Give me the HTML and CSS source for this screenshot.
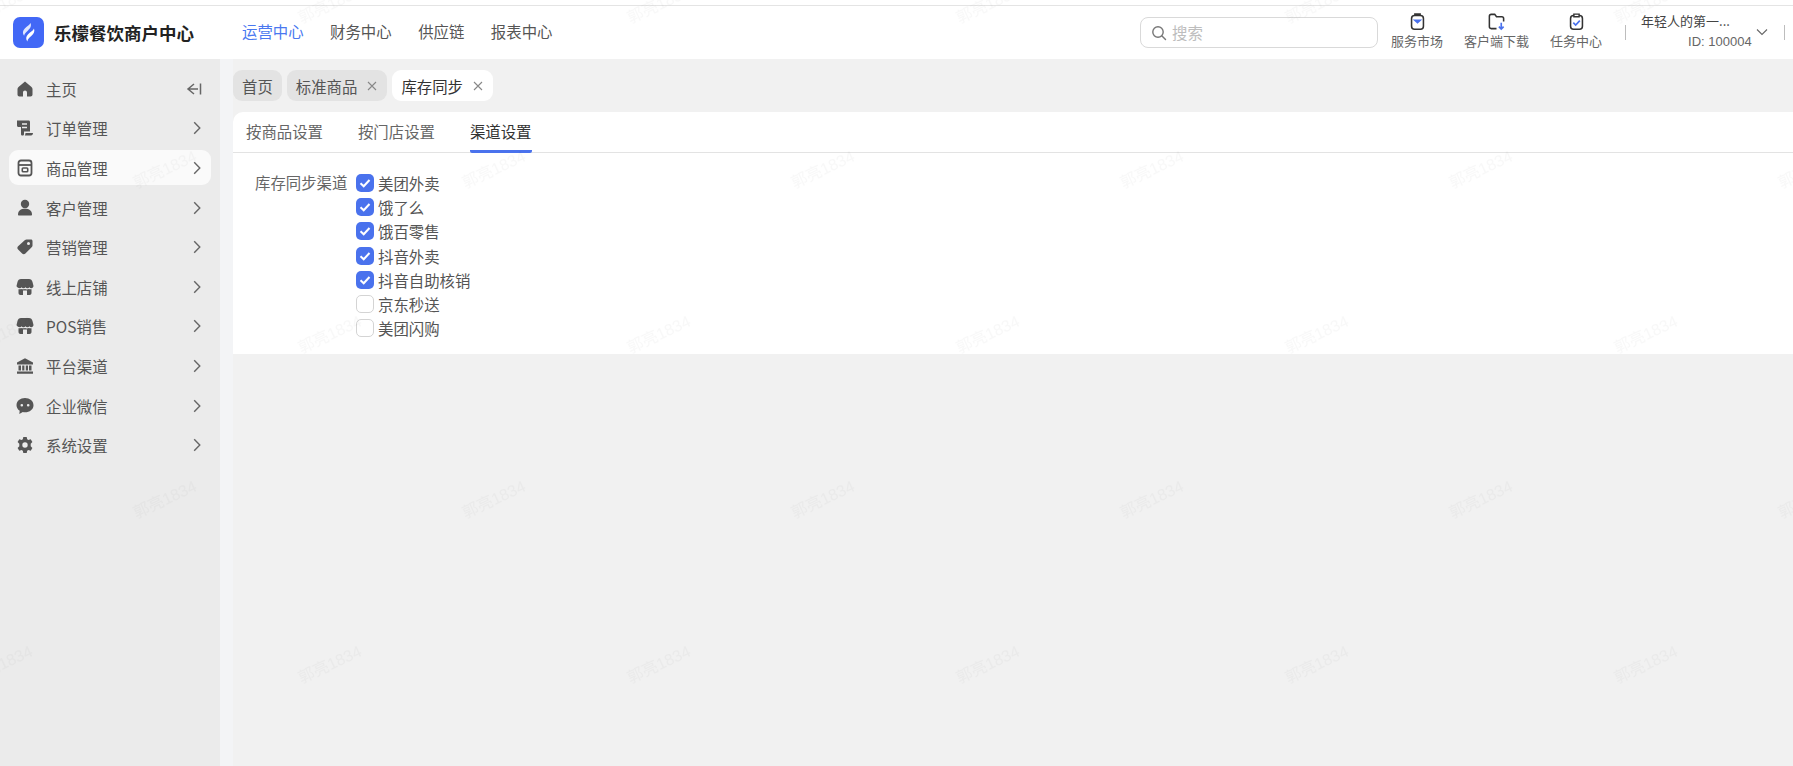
FILE: index.html
```html
<!DOCTYPE html>
<html lang="zh-CN">
<head>
<meta charset="utf-8">
<title>库存同步</title>
<link rel="stylesheet" href="styles.css">
</head>
<body>
<div class="topline"></div>
<header class="header">
  <div class="brand">
    <svg class="logo" viewBox="0 0 31 31"><rect width="31" height="31" rx="7" fill="#4268f6"/><path d="M17.500 6c1.300 3-.2 5.200-2.500 7.400-1.800 1.700-3.600 2.900-3.900 5.400-1.800-2.700-1.500-5.200.7-7.400 2-2.100 4.700-2.900 5.700-5.400z" fill="#dfe6fe"/><path d="M21 11.500c1.100 3.100-.4 5.400-3 7.800-1.600 1.500-3.300 2.700-3.700 5.200-1.700-2.600-1.400-5.100.8-7.300 2-2.100 4.800-3.100 5.900-5.700z" fill="#fff"/></svg>
    <span class="brand-name">乐檬餐饮商户中心</span>
  </div>
  <nav class="nav">
    <a class="nav-item active">运营中心</a>
    <a class="nav-item">财务中心</a>
    <a class="nav-item">供应链</a>
    <a class="nav-item">报表中心</a>
  </nav>
  <div class="search">
    <svg class="search-icon" viewBox="0 0 16 16"><circle cx="7" cy="7" r="5.200" fill="none" stroke="#777" stroke-width="1.400"/><path d="M11 11l3.500 3.500" stroke="#777" stroke-width="1.400" stroke-linecap="round"/></svg>
    <span class="placeholder">搜索</span>
  </div>
  <div class="tools">
    <div class="tool">
      <svg class="tool-icon" viewBox="0 0 16 16"><path d="M5.500 3h5c1.600 0 2.500 1 2.500 2.500V12c0 1.500-1 2.500-2.500 2.500h-5C4 14.500 3 13.500 3 12V5.500C3 4 4 3 5.500 3z" fill="none" stroke="#333" stroke-width="1.300"/><path d="M5.800 3V1.800h4.400V3" fill="none" stroke="#333" stroke-width="1.300"/><path d="M4 6.300h8L8 9.800z" fill="#4a72ed"/></svg>
      <span>服务市场</span>
    </div>
    <div class="tool">
      <svg class="tool-icon" viewBox="0 0 16 16"><path d="M8 14H3.500C2.500 14 2 13.300 2 12.500v-9C2 2.500 2.600 2 3.500 2h3l1.500 2h4.500c.9 0 1.500.6 1.500 1.500V8" fill="none" stroke="#333" stroke-width="1.300"/><path d="M12 9v5M10 12.300l2 2 2-2" fill="none" stroke="#4a72ed" stroke-width="1.400"/></svg>
      <span>客户端下载</span>
    </div>
    <div class="tool">
      <svg class="tool-icon" viewBox="0 0 16 16"><path d="M5.500 3h5c1.600 0 2.500 1 2.500 2.500V12c0 1.500-1 2.500-2.500 2.500h-5C4 14.500 3 13.500 3 12V5.500C3 4 4 3 5.500 3z" fill="none" stroke="#333" stroke-width="1.300"/><path d="M5.800 4V1.800h4.400V4z" fill="#fff" stroke="#333" stroke-width="1.200"/><path d="M5.300 9l2 2 3.500-3.700" fill="none" stroke="#4a72ed" stroke-width="1.400"/></svg>
      <span>任务中心</span>
    </div>
  </div>
  <span class="divider"></span>
  <div class="user">
    <div class="user-name">年轻人的第一...</div>
    <div class="user-id">ID: 100004</div>
  </div>
  <svg class="user-arrow" viewBox="0 0 12 12"><path d="M1 3.500l5 5 5-5" fill="none" stroke="#666" stroke-width="1.100"/></svg>
  <span class="divider"></span>
</header>
<div class="main">
  <aside class="sidebar">
    <div class="menu-item">
      <svg class="menu-icon" viewBox="0 0 18 18"><path d="M9 1.500L2.500 7c-.6.500-1 1.200-1 2v5.500c0 1 .8 2 2 2H7v-4c0-1.100.9-2 2-2s2 .9 2 2v4h3.500c1.200 0 2-1 2-2V9c0-.8-.4-1.500-1-2z" fill="#555"/></svg>
      <span class="menu-text">主页</span>
      <svg class="collapse" viewBox="0 0 16 14"><path d="M8 2L2 7l6 5M2 7h10M14.500 1.500v11" fill="none" stroke="#666" stroke-width="1.500"/></svg>
    </div>
    <div class="menu-item">
      <svg class="menu-icon" viewBox="0 0 18 18"><path d="M1 1.500h11.500c1 0 1.500.6 1.500 1.500v9.500H8V15c0 1-.6 1.500-1.500 1.500S5 16 5 15V8H2.500C1.600 8 1 7.400 1 6.500z" fill="#555"/><path d="M6 5h5M6 8.500h5" stroke="#ebebeb" stroke-width="1.500"/><path d="M9.500 14H17c0 1.500-.8 2.500-2 2.500H8.800c.5-.7.700-1.500.7-2.500z" fill="#555"/></svg>
      <span class="menu-text">订单管理</span>
      <svg class="chevron" viewBox="0 0 8 14"><path d="M1.200 1.200L6.800 7l-5.600 5.800" fill="none" stroke="#666" stroke-width="1.400"/></svg>
    </div>
    <div class="menu-item selected">
      <svg class="menu-icon" viewBox="0 0 18 18"><path d="M5 1.500h8c1.500 0 2.500 1 2.500 2.500v10c0 1.500-1 2.500-2.500 2.500H5c-1.500 0-2.500-1-2.500-2.500V4c0-1.500 1-2.500 2.500-2.500z" fill="none" stroke="#555" stroke-width="1.800"/><path d="M3 6h12" stroke="#555" stroke-width="1.800"/><rect x="6.300" y="9" width="5.400" height="3.800" rx=".8" fill="none" stroke="#555" stroke-width="1.600"/></svg>
      <span class="menu-text">商品管理</span>
      <svg class="chevron" viewBox="0 0 8 14"><path d="M1.200 1.200L6.800 7l-5.600 5.800" fill="none" stroke="#666" stroke-width="1.400"/></svg>
    </div>
    <div class="menu-item">
      <svg class="menu-icon" viewBox="0 0 18 18"><circle cx="9" cy="5" r="4.200" fill="#555"/><path d="M2 15.500c0-3.700 2.800-5.700 7-5.700s7 2 7 5.700c0 .7-.4 1-1 1H3c-.6 0-1-.3-1-1z" fill="#555"/></svg>
      <span class="menu-text">客户管理</span>
      <svg class="chevron" viewBox="0 0 8 14"><path d="M1.200 1.200L6.800 7l-5.600 5.800" fill="none" stroke="#666" stroke-width="1.400"/></svg>
    </div>
    <div class="menu-item">
      <svg class="menu-icon" viewBox="0 0 18 18"><path fill-rule="evenodd" d="M10.500 1.500H15c.9 0 1.500.6 1.500 1.500v4.500c0 .6-.2 1.100-.6 1.500l-6.500 6.500c-1 1-2.300 1-3.300 0l-4-4c-1-1-1-2.300 0-3.300L9 2.100c.4-.4.900-.6 1.500-.6zM12.500 4a1.500 1.500 0 100 3 1.500 1.500 0 000-3z" fill="#555"/></svg>
      <span class="menu-text">营销管理</span>
      <svg class="chevron" viewBox="0 0 8 14"><path d="M1.200 1.200L6.800 7l-5.600 5.800" fill="none" stroke="#666" stroke-width="1.400"/></svg>
    </div>
    <div class="menu-item">
      <svg class="menu-icon" viewBox="0 0 18 18"><path d="M5 1h8c1.800 0 3 1.300 3.500 3L17.500 8c0 1.200-1 2.200-2.200 2.200-.8 0-1.500-.4-1.900-1-.4.600-1.100 1-1.900 1s-1.500-.4-2-1c-.5.600-1.200 1-2 1s-1.500-.4-1.900-1c-.4.600-1.100 1-1.900 1C2.500 10.200 .5 9.200.5 8L1.500 4C2 2.300 3.200 1 5 1z" fill="#555"/><path fill-rule="evenodd" d="M2.500 11.200c.9.300 1.800.2 2.600-.2.900.4 2.700.5 3.900 0 .9.500 2.800.5 3.900 0 .9.400 1.700.5 2.600.2V15c0 1.200-.8 2-2 2H4.500c-1.200 0-2-.8-2-2zM7 12.500V17h4v-4.500z" fill="#555"/></svg>
      <span class="menu-text">线上店铺</span>
      <svg class="chevron" viewBox="0 0 8 14"><path d="M1.200 1.200L6.800 7l-5.600 5.800" fill="none" stroke="#666" stroke-width="1.400"/></svg>
    </div>
    <div class="menu-item">
      <svg class="menu-icon" viewBox="0 0 18 18"><path d="M5 1h8c1.800 0 3 1.300 3.500 3L17.500 8c0 1.200-1 2.200-2.200 2.200-.8 0-1.500-.4-1.900-1-.4.600-1.100 1-1.900 1s-1.500-.4-2-1c-.5.600-1.200 1-2 1s-1.500-.4-1.900-1c-.4.600-1.100 1-1.900 1C2.500 10.200 .5 9.200.5 8L1.500 4C2 2.300 3.200 1 5 1z" fill="#555"/><path fill-rule="evenodd" d="M2.500 11.200c.9.300 1.800.2 2.600-.2.900.4 2.700.5 3.900 0 .9.500 2.800.5 3.900 0 .9.400 1.700.5 2.600.2V15c0 1.200-.8 2-2 2H4.500c-1.200 0-2-.8-2-2zM7 12.500V17h4v-4.500z" fill="#555"/></svg>
      <span class="menu-text">POS销售</span>
      <svg class="chevron" viewBox="0 0 8 14"><path d="M1.200 1.200L6.800 7l-5.600 5.800" fill="none" stroke="#666" stroke-width="1.400"/></svg>
    </div>
    <div class="menu-item">
      <svg class="menu-icon" viewBox="0 0 18 18"><path d="M9 1.300l8 4.200v2H1v-2z" fill="#555"/><path d="M2.500 8.500h2.500v5H2.500zM6.200 8.500h2.200v5H6.200zM9.800 8.500h2.200v5H9.800zM13 8.500h2.500v5H13zM1 14.500h16v2.200H1z" fill="#555"/></svg>
      <span class="menu-text">平台渠道</span>
      <svg class="chevron" viewBox="0 0 8 14"><path d="M1.200 1.200L6.800 7l-5.600 5.800" fill="none" stroke="#666" stroke-width="1.400"/></svg>
    </div>
    <div class="menu-item">
      <svg class="menu-icon" viewBox="0 0 18 18"><path fill-rule="evenodd" d="M9 1c4.700 0 8.500 3 8.500 7.200S13.700 15.300 9 15.300c-.8 0-1.500-.1-2.200-.3L3.300 17l.4-3.300C1.700 12.400.5 10.400.5 8.200.5 4 4.300 1 9 1zM5.800 7a1.300 1.300 0 100 2.600 1.300 1.300 0 000-2.600zM12.200 7a1.300 1.300 0 100 2.600 1.300 1.300 0 000-2.600z" fill="#555"/></svg>
      <span class="menu-text">企业微信</span>
      <svg class="chevron" viewBox="0 0 8 14"><path d="M1.200 1.200L6.800 7l-5.600 5.800" fill="none" stroke="#666" stroke-width="1.400"/></svg>
    </div>
    <div class="menu-item">
      <svg class="menu-icon" viewBox="0 0 18 18"><path fill-rule="evenodd" d="M7.300 1h3.400l.5 2.300 1.200.7 2.300-.8L16.400 6l-1.700 1.700v2.600l1.700 1.700-1.700 2.800-2.300-.8-1.200.7-.5 2.300H7.300l-.5-2.300-1.200-.7-2.300.8L1.600 12l1.700-1.700V7.700L1.600 6l1.700-2.800 2.300.8 1.200-.7zM9 6.300a2.700 2.700 0 100 5.400 2.700 2.700 0 000-5.400z" fill="#555"/></svg>
      <span class="menu-text">系统设置</span>
      <svg class="chevron" viewBox="0 0 8 14"><path d="M1.200 1.200L6.800 7l-5.600 5.800" fill="none" stroke="#666" stroke-width="1.400"/></svg>
    </div>
  </aside>
  <main class="content">
    <div class="page-tabs">
      <div class="page-tab">首页</div>
      <div class="page-tab">标准商品<svg class="close" viewBox="0 0 10 10"><path d="M1 1l8 8M9 1l-8 8" stroke="#888" stroke-width="1.100"/></svg></div>
      <div class="page-tab current">库存同步<svg class="close" viewBox="0 0 10 10"><path d="M1 1l8 8M9 1l-8 8" stroke="#888" stroke-width="1.100"/></svg></div>
    </div>
    <section class="card">
      <div class="sub-tabs">
        <div class="sub-tab">按商品设置</div>
        <div class="sub-tab">按门店设置</div>
        <div class="sub-tab current">渠道设置</div>
      </div>
      <div class="form-row">
        <div class="form-label">库存同步渠道</div>
        <div class="checks">
          <label class="check"><span class="box on"><svg viewBox="0 0 18 18"><path d="M4.500 9.300l3.200 3 5.800-6.300" fill="none" stroke="#fff" stroke-width="2"/></svg></span>美团外卖</label>
          <label class="check"><span class="box on"><svg viewBox="0 0 18 18"><path d="M4.500 9.300l3.200 3 5.800-6.300" fill="none" stroke="#fff" stroke-width="2"/></svg></span>饿了么</label>
          <label class="check"><span class="box on"><svg viewBox="0 0 18 18"><path d="M4.500 9.300l3.200 3 5.800-6.300" fill="none" stroke="#fff" stroke-width="2"/></svg></span>饿百零售</label>
          <label class="check"><span class="box on"><svg viewBox="0 0 18 18"><path d="M4.500 9.300l3.200 3 5.800-6.300" fill="none" stroke="#fff" stroke-width="2"/></svg></span>抖音外卖</label>
          <label class="check"><span class="box on"><svg viewBox="0 0 18 18"><path d="M4.500 9.300l3.200 3 5.800-6.300" fill="none" stroke="#fff" stroke-width="2"/></svg></span>抖音自助核销</label>
          <label class="check"><span class="box"></span>京东秒送</label>
          <label class="check"><span class="box"></span>美团闪购</label>
        </div>
      </div>
    </section>
  </main>
</div>
<svg class="watermark" width="1793" height="766">
  <defs>
    <pattern id="wm" width="329" height="330" patternUnits="userSpaceOnUse" x="0" y="5">
      <text class="wm-text" transform="translate(165 165) rotate(-25)" text-anchor="middle" y="5">郭亮1834</text>
      <text class="wm-text" transform="translate(1 0) rotate(-25)" text-anchor="middle" y="5">郭亮1834</text>
      <text class="wm-text" transform="translate(330 0) rotate(-25)" text-anchor="middle" y="5">郭亮1834</text>
      <text class="wm-text" transform="translate(1 330) rotate(-25)" text-anchor="middle" y="5">郭亮1834</text>
      <text class="wm-text" transform="translate(330 330) rotate(-25)" text-anchor="middle" y="5">郭亮1834</text>
    </pattern>
  </defs>
  <rect width="1793" height="766" fill="url(#wm)"/>
</svg>
</body>
</html>
```
FILE: styles.css
```css
* { box-sizing: border-box; }
html, body { margin: 0; height: 100%; }
body {
  width: 1793px;
  height: 766px;
  overflow: hidden;
  background: #f1f1f1;
  color: #555;
  font-family: "Noto Sans CJK SC", "Noto Sans", sans-serif;
  font-size: 15.400px;
  position: relative;
}
.topline { height: 6px; background: #fff; border-bottom: 1px solid #e4e4e4; }
.header {
  height: 53px;
  background: #fff;
  display: flex;
  align-items: center;
  padding-left: 13px;
}
.brand { display: flex; align-items: center; width: 229px; flex: none; }
.logo { width: 31px; height: 31px; flex: none; }
.brand-name { margin-left: 10px; font-size: 17.500px; font-weight: 700; color: #222; white-space: nowrap; line-height: 1; }
.nav { display: flex; gap: 26.500px; width: 898px; flex: none; margin-top: -3px; }
.nav-item { color: #555; line-height: 20px; white-space: nowrap; }
.nav-item.active { color: #4a78f0; }
.search {
  width: 238px;
  height: 31px;
  flex: none;
  border: 1px solid #d9d9d9;
  border-radius: 8px;
  display: flex;
  align-items: center;
  padding-left: 10px;
}
.search-icon { width: 16px; height: 16px; flex: none; }
.placeholder { margin-left: 5px; color: #bdbdbd; margin-top: -2px; }
.tools { display: flex; gap: 21px; margin-left: 13px; flex: none; margin-top: -4px; }
.tool { display: flex; flex-direction: column; align-items: center; font-size: 13px; color: #666; line-height: 17px; }
.tool-icon { width: 19px; height: 19px; margin-bottom: 1px; }
.divider { width: 1px; height: 15px; background: #bdbdbd; flex: none; margin-left: 23px; }
.user { margin-left: 15px; font-size: 13px; width: 110px; flex: none; margin-top: -2px; }
.user-name { color: #444; line-height: 18px; white-space: nowrap; }
.user-id { color: #666; line-height: 18px; margin-top: 3px; margin-left: 47px; white-space: nowrap; font-family: "Liberation Sans", sans-serif; }
.user-arrow { width: 12px; height: 12px; flex: none; margin-left: 5px; margin-top: -2px; }
.header .divider:last-child { margin-left: 16px; }
.main { display: flex; height: 707px; background: #f3f4f6; }
.sidebar { width: 220px; flex: none; background: #ebebeb; padding: 10px 9px 0; display: flex; flex-direction: column; }
.menu-item {
  height: 39.600px;
  display: flex;
  align-items: center;
  padding: 0 9px 0 7px;
  color: #555;
  flex: none;
}
.menu-item.selected { background: #fafafa; border-radius: 9px; height: 35px; margin: 2.300px 0; }
.menu-icon { width: 18px; height: 18px; flex: none; }
.menu-text { margin-left: 12px; flex: 1; white-space: nowrap; }
.chevron { width: 8px; height: 14px; flex: none; margin-right: 1px; }
.collapse { width: 16px; height: 14px; flex: none; }
.content { flex: 1; margin-left: 13px; background: #f1f1f1; display: flex; flex-direction: column; }
.page-tabs { display: flex; gap: 5px; padding-top: 11px; height: 53px; }
.page-tab {
  height: 31px;
  padding: 0 9px;
  background: #e3e3e3;
  border-radius: 9px;
  display: flex;
  align-items: center;
  color: #555;
}
.page-tab.current { background: #fff; color: #333; }
.close { width: 10px; height: 10px; margin-left: 10px; margin-right: 1px; }
.card { background: #fff; border-radius: 10px 0 0 0; height: 242px; }
.sub-tabs { height: 41px; display: flex; gap: 35px; padding-left: 13px; border-bottom: 1px solid #e3e3e3; }
.sub-tab { height: 41px; line-height: 38px; color: #666; }
.sub-tab.current { color: #333; border-bottom: 3px solid #4a72ed; border-radius: 2px; }
.form-row { display: flex; padding-top: 18px; padding-left: 22px; }
.form-label { width: 101px; line-height: 22px; color: #666; flex: none; }
.checks { display: flex; flex-direction: column; }
.check { height: 24.200px; display: flex; align-items: center; color: #555; line-height: 20px; }
.box {
  width: 18px;
  height: 18px;
  border: 1px solid #d4d4d4;
  border-radius: 5px;
  background: #fff;
  margin-right: 4px;
  flex: none;
}
.box.on { background: #4a72ed; border: 0; }
.box svg { display: block; width: 18px; height: 18px; }
.watermark { position: absolute; left: 0; top: 0; pointer-events: none; }
.wm-text { font-family: "Liberation Sans", "Noto Sans CJK SC", sans-serif; font-size: 16px; fill: rgba(0, 0, 0, 0.028); }
```
